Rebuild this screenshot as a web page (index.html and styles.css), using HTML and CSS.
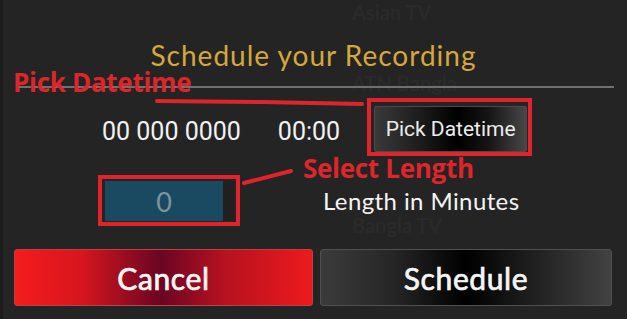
FILE: index.html
```html
<!DOCTYPE html>
<html lang="en">
<head>
<meta charset="utf-8">
<title>Schedule your Recording</title>
<link rel="stylesheet" href="styles.css">
</head>
<body>
<div class="screen">
  <div class="backdrop">
    <div class="channel">Asian TV</div>
    <div class="channel">ATN Bangla</div>
    <div class="channel"></div>
    <div class="channel">Bangla TV</div>
  </div>

  <div class="dialog">
    <h1 class="title">Schedule your Recording</h1>
    <div class="divider"></div>

    <div class="row-date">
      <span class="date">00 000 0000</span>
      <span class="time">00:00</span>
      <button class="btn-pick">Pick Datetime</button>
    </div>

    <div class="row-length">
      <div class="length-input"><span class="length-value">0</span><span class="length-side"></span></div>
      <span class="length-label">Length in Minutes</span>
    </div>

    <div class="actions">
      <button class="btn btn-cancel">Cancel</button>
      <button class="btn btn-schedule">Schedule</button>
    </div>
  </div>

  <div class="annotations">
    <svg class="marks" width="627" height="319" viewBox="0 0 627 319">
      <rect x="369" y="100" width="161" height="54" fill="none" stroke="#df242b" stroke-width="4"/>
      <rect x="100" y="177" width="138" height="47" fill="none" stroke="#df242b" stroke-width="4"/>
      <polyline points="157,101 262,102 362,104" fill="none" stroke="#df242b" stroke-width="4" stroke-linecap="round"/>
      <line x1="244" y1="183" x2="291" y2="171" stroke="#df242b" stroke-width="4" stroke-linecap="round"/>
    </svg>
    <span class="note note-pick">Pick Datetime</span>
    <span class="note note-length">Select Length</span>
  </div>
</div>
</body>
</html>
```

FILE: styles.css
```css
* { box-sizing: border-box; }

html, body {
  margin: 0;
  padding: 0;
  background: #242424;
}

.screen {
  position: relative;
  width: 627px;
  height: 319px;
  overflow: hidden;
  background: #242424;
  border-left: 3px solid #1c1c1c;
}

/* faint channel list behind the dialog */
.backdrop {
  position: absolute;
  left: 0;
  top: 2px;
  width: 100%;
  display: flex;
  flex-direction: column;
  padding-left: 349px;
}

.channel {
  height: 71px;
  font-family: Lato, "Open Sans", sans-serif;
  font-weight: 700;
  font-size: 20px;
  line-height: 20px;
  color: #2a2a2a;
}

.dialog {
  position: relative;
  display: flex;
  flex-direction: column;
  height: 100%;
}

.title {
  margin: 40px 0 0 0;
  text-align: center;
  font-family: Lato, "Open Sans", sans-serif;
  font-weight: 400;
  font-size: 28px;
  line-height: 31px;
  letter-spacing: 1px;
  color: #d6a73c;
  padding-right: 3px;
}

.divider {
  height: 2px;
  margin: 15px 13px 0 13px;
  background: #707070;
}

.row-date {
  display: flex;
  align-items: center;
  height: 46px;
  margin-top: 18px;
  padding-left: 99px;
  font-family: Roboto, "Noto Sans", sans-serif;
  color: #f2f2f2;
}

.date, .time {
  font-size: 25px;
  line-height: 30px;
  padding-top: 5px;
}

.time { margin-left: 37px; }

.btn-pick {
  margin-left: 34px;
  width: 153px;
  height: 46px;
  padding: 0;
  border: 1px solid #4a4a4a;
  border-radius: 2px;
  background: linear-gradient(90deg, #3a3a3a 0%, #1c1c1c 30%, #000 55%, #151515 75%, #474747 100%);
  color: #ececec;
  font-family: Roboto, "Noto Sans", sans-serif;
  font-size: 21px;
}

.row-length {
  display: flex;
  align-items: center;
  height: 40px;
  margin-top: 29px;
  padding-left: 102px;
}

.length-input {
  display: flex;
  width: 130px;
  height: 40px;
}

.length-value {
  flex: 1;
  display: flex;
  align-items: center;
  justify-content: center;
  background: #1a4a62;
  color: #7f939e;
  font-family: Lato, "Open Sans", sans-serif;
  font-size: 27px;
  line-height: 1;
}

.length-side {
  width: 12px;
  background: #202020;
}

.length-label {
  margin-left: 88px;
  font-family: Lato, "Open Sans", sans-serif;
  font-size: 24px;
  line-height: 1;
  letter-spacing: 0.4px;
  color: #f4f4f4;
}

.actions {
  display: grid;
  grid-template-columns: 299px 292px;
  gap: 7px;
  margin-top: 28px;
  padding-left: 11px;
}

.btn {
  height: 57px;
  border-radius: 3px;
  padding: 0;
  font-family: Lato, "Open Sans", sans-serif;
  font-weight: 400;
  font-size: 30px;
  letter-spacing: 0.6px;
  -webkit-text-stroke: 0.7px #f5f5f5;
  color: #f5f5f5;
}

.btn-cancel {
  border: 1px solid #b8444a;
  background: linear-gradient(90deg, #f41c1d 0%, #d8161e 22%, #6a0522 49%, #b51120 70%, #ee1a1c 100%);
}

.btn-schedule {
  border: 1px solid #505050;
  background: linear-gradient(90deg, #3b3b3b 0%, #262626 25%, #000 50%, #222 75%, #424242 100%);
}

/* red tutorial annotations on top */
.annotations {
  position: absolute;
  left: 0;
  top: 0;
  width: 627px;
  height: 319px;
  pointer-events: none;
}

.marks {
  position: absolute;
  left: -3px;
  top: 0;
}

.note {
  position: absolute;
  font-family: "Open Sans", sans-serif;
  font-weight: 700;
  color: #dc262c;
  letter-spacing: -0.3px;
  line-height: 1;
}

.note-pick {
  left: 10px;
  top: 69px;
  font-size: 26px;
}

.note-length {
  left: 300px;
  top: 155px;
  font-size: 26px;
}
```
